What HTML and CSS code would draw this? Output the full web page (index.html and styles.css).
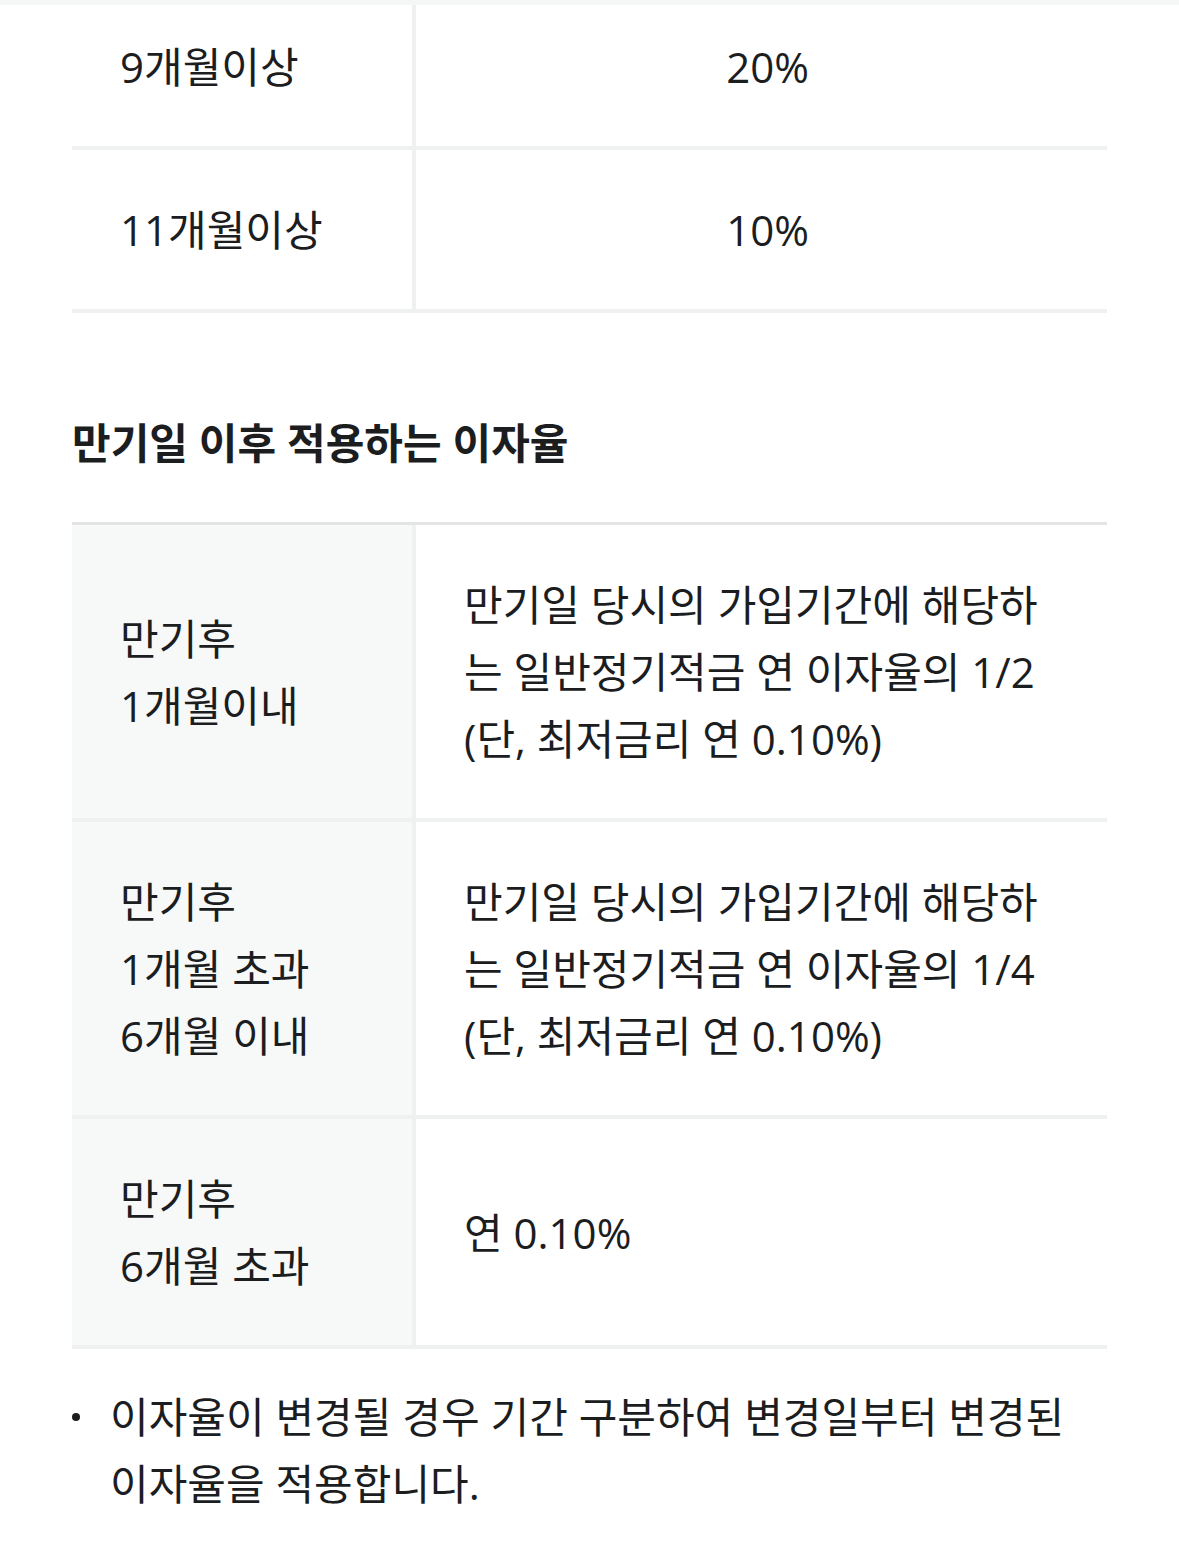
FILE: index.html
```html
<!DOCTYPE html>
<html lang="ko">
<head>
<meta charset="utf-8">
<title>만기일 이후 적용하는 이자율</title>
<link rel="stylesheet" href="styles.css">
</head>
<body>
<div class="topband"></div>
<main class="page">
  <div class="rate-table plain">
    <div class="row first">
      <div class="cell label">9개월이상</div>
      <div class="cell value center">20%</div>
    </div>
    <div class="row">
      <div class="cell label">11개월이상</div>
      <div class="cell value center">10%</div>
    </div>
  </div>

  <h2 class="section-title">만기일 이후 적용하는 이자율</h2>

  <div class="rate-table shaded">
    <div class="row">
      <div class="cell label">만기후<br>1개월이내</div>
      <div class="cell value">만기일 당시의 가입기간에 해당하는 일반정기적금 연 이자율의 1/2<br>(단, 최저금리 연 0.10%)</div>
    </div>
    <div class="row">
      <div class="cell label">만기후<br>1개월 초과<br>6개월 이내</div>
      <div class="cell value">만기일 당시의 가입기간에 해당하는 일반정기적금 연 이자율의 1/4<br>(단, 최저금리 연 0.10%)</div>
    </div>
    <div class="row">
      <div class="cell label">만기후<br>6개월 초과</div>
      <div class="cell value">연 0.10%</div>
    </div>
  </div>

  <ul class="notes">
    <li><span class="dot"></span><span class="note-text">이자율이 변경될 경우 기간 구분하여 변경일부터 변경된 이자율을 적용합니다.</span></li>
  </ul>
</main>
</body>
</html>
```

FILE: styles.css
```css
html, body {
  margin: 0;
  padding: 0;
  background: #ffffff;
}

body {
  font-family: "Open Sans", "Noto Sans CJK KR", sans-serif;
  color: #1b1d1f;
  font-size: 42px;
  line-height: 67px;
}

.topband {
  height: 5px;
  background: #f5f6f6;
}

.page {
  padding: 0 72px;
}

.rate-table {
  display: flex;
  flex-direction: column;
}

.rate-table.shaded {
  border-top: 3px solid #e3e4e4;
}

.row {
  display: grid;
  grid-template-columns: 340px 1fr;
  border-bottom: 4px solid #eff0f0;
}

.cell {
  display: flex;
  align-items: center;
  padding: 46px 48px;
}

.cell.value {
  border-left: 4px solid #eff0f0;
  word-break: break-all;
  padding-right: 36px;
}

.cell.center {
  justify-content: center;
}

.row.first .cell {
  padding-top: 28px;
  padding-bottom: 46px;
}

.shaded .cell.label {
  background: #f7f8f8;
}

.section-title {
  margin: 96px 0 46px;
  font-size: 42px;
  line-height: 67px;
  font-weight: 700;
}

.notes {
  list-style: none;
  margin: 34px 0 0;
  padding: 0;
}

.notes li {
  display: flex;
  align-items: flex-start;
}

.dot {
  flex: none;
  width: 8px;
  height: 8px;
  border-radius: 50%;
  background: #1b1d1f;
  margin: 30px 30px 0 0;
}

.note-text {
  word-break: keep-all;
}
```
